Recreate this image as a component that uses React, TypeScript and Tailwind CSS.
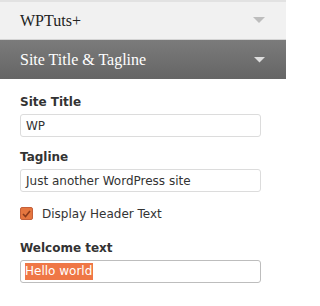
export default function App() {
  const sans = 'font-["DejaVu_Sans",sans-serif]';
  const serif = 'font-["Liberation_Serif",serif]';
  return (
    <div className="w-[286px] h-[306px] bg-white">
      <div className="h-[2px] bg-[#e2e2e2]" />
      <div className="h-[38px] bg-[#f1f1f1] border-b border-[#d4d4d4] flex items-center justify-between pl-[20px] pr-[20px]">
        <span className={`${serif} text-[16px] text-[#222]`}>WPTuts+</span>
        <svg width="12" height="7" viewBox="0 0 12 7" className="mr-[1px]">
          <polygon points="0,0 12,0 6,6" fill="#bdbdbd" />
        </svg>
      </div>
      <div className="h-[39px] bg-gradient-to-b from-[#7b7b7b] to-[#656565] flex items-center justify-between pl-[20px] pr-[20px]">
        <span className={`${serif} text-[16px] text-white`}>Site Title &amp; Tagline</span>
        <svg width="11" height="6" viewBox="0 0 11 6" className="mr-[1px]">
          <polygon points="0,0 11,0 5.5,5.5" fill="#dedede" />
        </svg>
      </div>
      <div className={`${sans} px-[20px] pt-[15px] text-[12px] text-[#333]`}>
        <div className="font-bold text-[12px] leading-[16px]">Site Title</div>
        <div className="mt-[4px] h-[23px] w-[241px] border border-[#dcdcdc] rounded-[3px] flex items-center px-[5px]">WP</div>
        <div className="mt-[12px] font-bold text-[12px] leading-[16px]">Tagline</div>
        <div className="mt-[4px] h-[23px] w-[241px] border border-[#dcdcdc] rounded-[3px] flex items-center px-[5px]">Just another WordPress site</div>
        <div className="mt-[15px] flex items-center gap-[9px] h-[13px]">
          <span className="w-[13px] h-[13px] rounded-[2px] bg-[#e5763f] border border-[#c5603a] flex items-center justify-center">
            <svg width="9" height="8" viewBox="0 0 9 8">
              <polyline points="1,4 3.5,6.5 8,1" fill="none" stroke="#8a3a1c" strokeWidth="1.6" />
            </svg>
          </span>
          <span className="text-[12px]">Display Header Text</span>
        </div>
        <div className="mt-[20px] font-bold text-[12px] leading-[16px]">Welcome text</div>
        <div className="mt-[4px] h-[23px] w-[241px] border border-[#bdbdbd] rounded-[3px] flex items-center px-[4px]">
          <span className="bg-[#ef7746] text-white text-[12px] leading-[17px] pr-[1px]">Hello world</span>
        </div>
      </div>
    </div>
  );
}
